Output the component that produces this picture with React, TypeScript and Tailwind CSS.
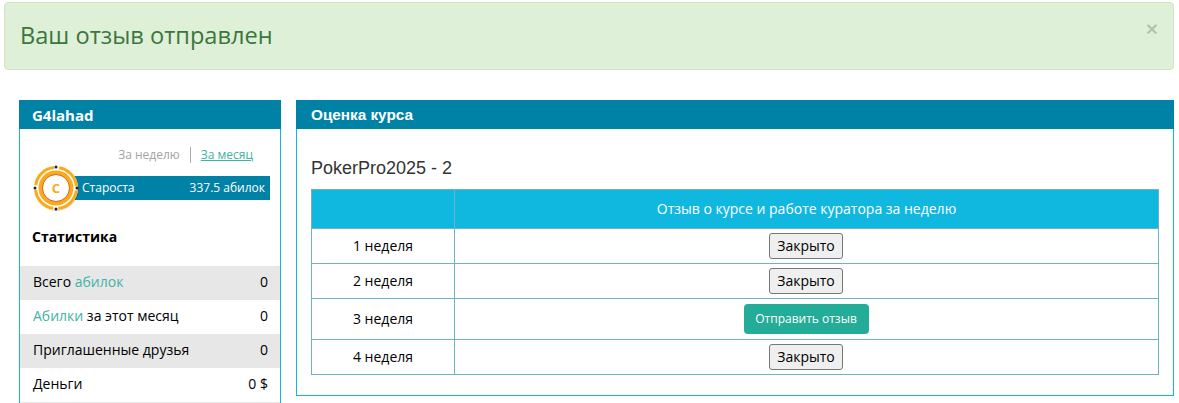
import React from 'react';

const stats = [
  { id: 'total', label: <>Всего <span className="text-[#3fb2a5]">абилок</span></>, value: '0', shaded: true },
  { id: 'month', label: <><span className="text-[#3fb2a5]">Абилки</span> за этот месяц</>, value: '0', shaded: false },
  { id: 'friends', label: <>Приглашенные друзья</>, value: '0', shaded: true },
  { id: 'money', label: <>Деньги</>, value: '0 $', shaded: false },
];

const weeks = [
  { name: '1 неделя', open: false, h: 'h-[35px]' },
  { name: '2 неделя', open: false, h: 'h-[35px]' },
  { name: '3 неделя', open: true, h: 'h-[41px]' },
  { name: '4 неделя', open: false, h: 'h-[35px]' },
];

const Chip = () => (
  <div className="absolute left-0 top-0 flex h-[46px] w-[46px] items-center justify-center">
    <svg width="46" height="46" viewBox="0 0 46 46" className="absolute inset-0">
      <circle cx="23.5" cy="24" r="22" fill="#000" opacity="0.15" />
      <circle cx="23" cy="23" r="22" fill="#fff" />
      <circle cx="23" cy="23" r="20.5" fill="none" stroke="#fbaa1c" strokeWidth="3" strokeDasharray="27.2 5" strokeDashoffset="-2.5" />
      <circle cx="23" cy="23" r="17.5" fill="#fbaa1c" />
      <circle cx="23" cy="23" r="13.5" fill="#fff" stroke="#c4641c" strokeWidth="1" />
      <circle cx="23" cy="2" r="1.5" fill="#222" />
      <circle cx="23" cy="44" r="1.5" fill="#222" />
      <circle cx="2" cy="23" r="1.5" fill="#222" />
      <circle cx="44" cy="23" r="1.5" fill="#222" />
    </svg>
    <span className="relative text-[13px] font-bold leading-none text-[#fbaa1c]">C</span>
  </div>
);

export default function App() {
  return (
    <div className="h-[403px] w-[1179px] overflow-hidden bg-white font-['Open_Sans',sans-serif] text-black">
      <div className="ml-1 mr-[5px] mt-0.5 flex h-[68px] items-start justify-between rounded border border-[#d0e6be] bg-[#dff0d8] px-[15px]">
        <h1 className="mt-4 text-[23.6px] leading-[33px] text-[#3c763d]">Ваш отзыв отправлен</h1>
        <span className="mt-[11px] font-['Liberation_Sans',sans-serif] text-[21px] font-bold leading-[30px] text-black/20">×</span>
      </div>

      <div className="ml-[19px] mr-[5px] mt-[30px] flex items-start gap-[15px]">
        <aside className="w-[262px] shrink-0 border-x border-[#10b7df]">
          <div className="-mx-px flex h-[29px] items-center bg-[#0082a6] pl-[13px] pt-px text-[15px] font-bold leading-none text-white">G4lahad</div>
          <div className="flex justify-end pt-[18px] pr-[27px] text-xs leading-4">
            <span className="border-r border-[#aaa] pr-[10px] text-[#a3a3a3]">За неделю</span>
            <span className="pl-[10px] text-[#3fb2a5] underline">За месяц</span>
          </div>
          <div className="relative ml-[13px] mr-[10px] mt-[2px] h-[62px] pt-[11px]">
            <div className="ml-[30px] flex h-6 items-center justify-between bg-[#0082a6] pl-[19px] pr-[5px] text-xs text-white">
              <span>Староста</span>
              <span>337.5 абилок</span>
            </div>
            <Chip />
          </div>
          <div className="pl-3 text-sm font-bold leading-5">Статистика</div>
          <div className="mt-[19px] border-b border-[#e7e7e7]">
            {stats.map((row) => (
              <div key={row.id} className={`flex h-[34px] items-center justify-between pb-0.5 pl-[13px] pr-3 text-sm ${row.shaded ? 'bg-[#e7e7e7]' : 'bg-white'}`}>
                <span>{row.label}</span>
                <span>{row.value}</span>
              </div>
            ))}
          </div>
        </aside>

        <main className="h-[296px] flex-1 border border-t-0 border-[#10b7df]">
          <div className="-mx-px flex h-[29px] items-center bg-[#0082a6] pl-[15px] pt-px font-['Liberation_Sans',sans-serif] text-[15.3px] font-bold text-white">Оценка курса</div>
          <div className="px-[14px]">
            <h2 className="mt-[27px] font-['Liberation_Sans',sans-serif] text-lg leading-[24px] text-[#333]">PokerPro2025 - 2</h2>
            <div className="mt-[9px] border border-[#6db3c5]">
              <div className="flex h-[38px] bg-[#10b7df] text-sm text-white">
                <div className="w-[143px] border-r border-[#6db3c5]" />
                <div className="flex flex-1 items-center justify-center">Отзыв о курсе и работе куратора за неделю</div>
              </div>
              {weeks.map((week) => (
                <div key={week.name} className={`flex border-t border-[#6db3c5] text-sm ${week.h}`}>
                  <div className="flex w-[143px] items-center justify-center border-r border-[#6db3c5]">{week.name}</div>
                  <div className="flex flex-1 items-center justify-center pr-px">
                    {week.open ? (
                      <button className="h-[30px] w-[125px] rounded bg-[#23ac97] text-xs text-white">Отправить отзыв</button>
                    ) : (
                      <button className="h-[26px] w-[74px] rounded-[3px] border border-[#767676] bg-[#efefef] text-sm text-black">Закрыто</button>
                    )}
                  </div>
                </div>
              ))}
            </div>
          </div>
        </main>
      </div>
    </div>
  );
}
